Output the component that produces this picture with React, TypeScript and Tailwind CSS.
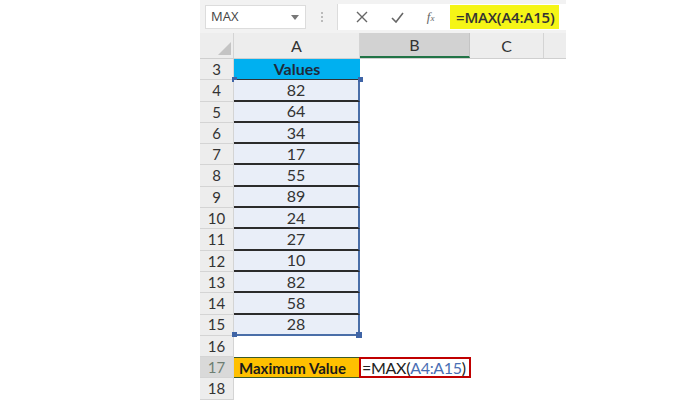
import React from "react";

const rows = [
  { n: 4, v: 82 },
  { n: 5, v: 64 },
  { n: 6, v: 34 },
  { n: 7, v: 17 },
  { n: 8, v: 55 },
  { n: 9, v: 89 },
  { n: 10, v: 24 },
  { n: 11, v: 27 },
  { n: 12, v: 10 },
  { n: 13, v: 82 },
  { n: 14, v: 58 },
  { n: 15, v: 28 },
];

function RowHead({ n, active }: { n: number; active?: boolean }) {
  return (
    <div
      className={
        "w-[34px] shrink-0 flex items-center justify-center border-r border-b border-[#d4d4d4] text-[15px] " +
        (active ? "bg-[#d9d9d9] text-[#6d7e72]" : "bg-[#ededed] text-[#333]")
      }
    >
      {n}
    </div>
  );
}

export default function App() {
  return (
    <div className="w-[700px] h-[400px] bg-white overflow-hidden font-['Lato','Liberation_Sans',sans-serif]">
      <div className="ml-[200px] w-[366px] flex flex-col">
        {/* formula bar */}
        <div className="h-[33px] bg-[#f2f2f2] flex items-center pt-[1px]">
          <div className="ml-[5px] w-[101px] h-[24px] bg-white border border-[#dcdcdc] flex items-center justify-between pl-[5px] pr-[6px] text-[13px] text-[#444] font-['Open_Sans',sans-serif]">
            <span>MAX</span>
            <svg width="8" height="5" viewBox="0 0 8 5">
              <path d="M0 0 L8 0 L4 5 Z" fill="#777" />
            </svg>
          </div>
          <div className="w-[31px] flex flex-col items-center gap-[2px]">
            <div className="w-[2px] h-[2px] bg-[#bbb]" />
            <div className="w-[2px] h-[2px] bg-[#bbb]" />
            <div className="w-[2px] h-[2px] bg-[#bbb]" />
          </div>
          <div className="h-[26px] flex-1 bg-white border-l border-[#dcdcdc] flex items-center">
            <div className="w-[108px] flex items-center justify-around pl-[6px]">
              <svg width="12" height="12" viewBox="0 0 12 12">
                <path d="M1 1 L11 11 M11 1 L1 11" stroke="#666" strokeWidth="1.4" />
              </svg>
              <svg width="13" height="11" viewBox="0 0 13 11">
                <path d="M1 6 L5 10 L12 1" stroke="#666" strokeWidth="1.6" fill="none" />
              </svg>
              <span className="italic text-[13px] text-[#666] font-['Liberation_Serif',serif]">
                f<span className="text-[9px]">x</span>
              </span>
            </div>
            <div className="ml-[4px] w-[109px] h-[24px] bg-[#f5f516] flex items-center pl-[6px] text-[15px] font-semibold text-[#333] font-['Open_Sans',sans-serif] tracking-[-0.2px]">
              =MAX(A4:A15)
            </div>
          </div>
        </div>
        {/* column headers */}
        <div className="h-[26px] flex bg-[#ededed] border-b border-[#cfcfcf] text-[16px] text-[#333]">
          <div className="w-[34px] flex items-end justify-end pr-[2px] pb-[3px] border-r border-[#d4d4d4]">
            <svg width="13" height="13" viewBox="0 0 13 13">
              <path d="M13 0 L13 13 L0 13 Z" fill="#c4c4c4" />
            </svg>
          </div>
          <div className="w-[126px] flex items-center justify-center border-r border-[#d4d4d4]">A</div>
          <div className="w-[110px] flex items-center justify-center bg-[#d2d2d2] border-b-2 border-[#217346] border-r border-r-[#c4c4c4]">
            B
          </div>
          <div className="w-[74px] flex items-center justify-center border-r border-[#d4d4d4]">C</div>
          <div className="flex-1" />
        </div>
        {/* row 3 */}
        <div className="h-[21.3px] flex">
          <RowHead n={3} />
          <div className="relative w-[126px] bg-[#00b0f0] flex items-center justify-center text-[16px] font-bold text-[#1f2a3a] border-b border-[#333]">
            Values
            <div className="absolute left-[-2px] bottom-[-3px] w-[5px] h-[5px] bg-[#3f64a6]" />
            <div className="absolute right-[-3px] bottom-[-3px] w-[5px] h-[5px] bg-[#3f64a6] z-10" />
          </div>
          <div className="flex-1" />
        </div>
        {/* data rows */}
        {rows.map((r, i) => (
          <div key={r.n} className="h-[21.3px] flex">
            <RowHead n={r.n} />
            <div
              className={
                "relative w-[126px] bg-[#e9eef8] flex items-center justify-center text-[16px] text-[#333] border-r-2 border-r-[#4a6ea8] " +
                (i < rows.length - 1 ? "border-b-2 border-b-[#2b2b2b]" : "border-b-2 border-b-[#4a6ea8]")
              }
            >
              {r.v}
              {i === rows.length - 1 && (
                <>
                  <div className="absolute left-[-2px] bottom-[-3px] w-[5px] h-[5px] bg-[#3f64a6]" />
                  <div className="absolute right-[-4px] bottom-[-4px] w-[6px] h-[6px] bg-[#3f64a6]" />
                </>
              )}
            </div>
            <div className="flex-1" />
          </div>
        ))}
        {/* row 16 */}
        <div className="h-[21.3px] flex">
          <RowHead n={16} />
          <div className="flex-1" />
        </div>
        {/* row 17 */}
        <div className="h-[21.3px] flex">
          <RowHead n={17} active />
          <div className="w-[126px] bg-[#ffc000] flex items-center pl-[5px] text-[15px] font-bold text-[#1a1a1a] border-y border-[#3a5a2a]">
            Maximum Value
          </div>
          <div className="w-[112px] -ml-[1px] border-2 border-[#c00000] flex items-center pl-[1px] text-[16px] tracking-[-0.3px] text-[#222] bg-white whitespace-nowrap">
            =MAX(<span className="text-[#4a6fb5]">A4:A15</span>)
          </div>
          <div className="flex-1" />
        </div>
        {/* row 18 */}
        <div className="h-[21.3px] flex">
          <RowHead n={18} />
          <div className="flex-1" />
        </div>
      </div>
    </div>
  );
}
